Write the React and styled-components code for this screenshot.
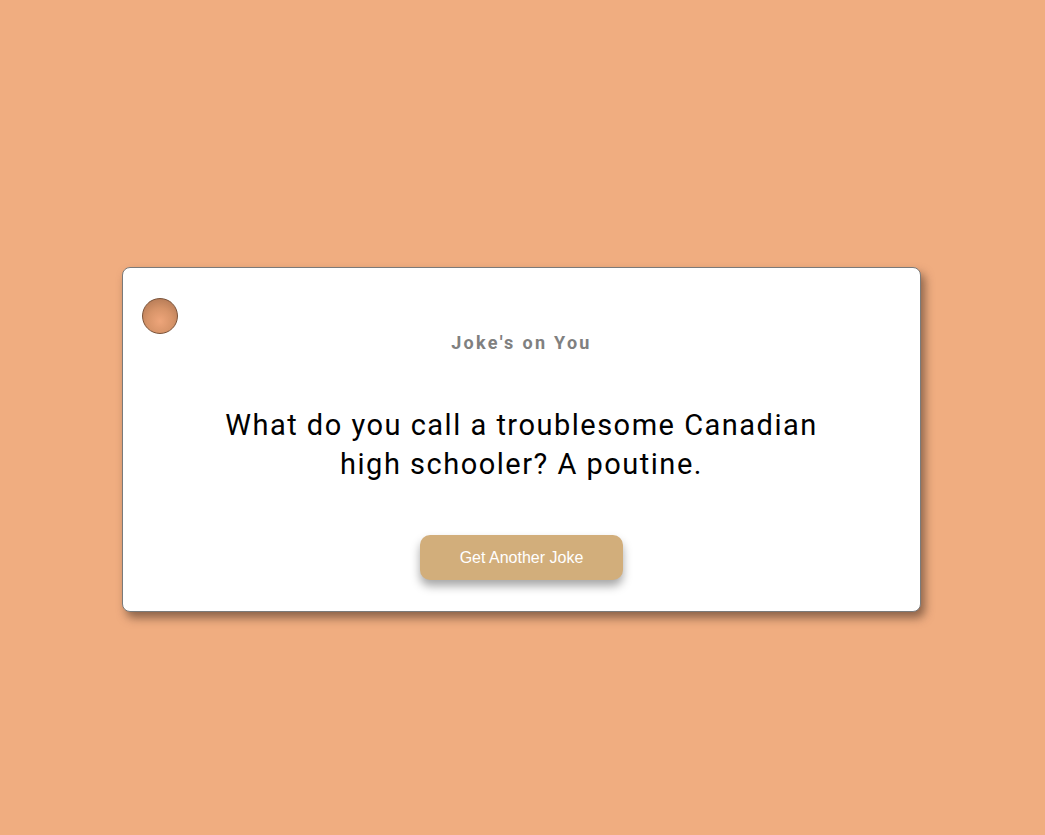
import React from 'react'
import styled, { createGlobalStyle } from 'styled-components'

const GlobalStyle = createGlobalStyle`
  html, body {
    margin: 0;
    background: #f0ad80;
  }
  body {
    font-family: Roboto, "Liberation Sans", sans-serif;
  }
`

const Page = styled.div`
  min-height: 835px;
  display: flex;
  flex-direction: column;
  align-items: center;
  padding: 267px 2px 0 0;
  box-sizing: border-box;
`

const Card = styled.div`
  position: relative;
  width: 799px;
  height: 345px;
  box-sizing: border-box;
  background: #fff;
  border: 1px solid #7a7a7a;
  border-radius: 8px;
  box-shadow: 4px 6px 10px rgba(60, 40, 30, 0.55);
  display: flex;
  flex-direction: column;
  align-items: center;
  padding-top: 64px;
`

const Dot = styled.div`
  position: absolute;
  left: 19px;
  top: 30px;
  width: 34px;
  height: 34px;
  border-radius: 50%;
  border: 1px solid #7a5238;
  background: radial-gradient(circle at 50% 65%, #eea57a 0%, #d79469 45%, #a8714f 100%);
`

const Title = styled.h1`
  margin: 0;
  font-size: 18px;
  font-weight: 700;
  letter-spacing: 2.3px;
  color: #808080;
  line-height: 22px;
`

const Joke = styled.p`
  margin: 52px 0 0;
  max-width: 640px;
  text-align: center;
  font-size: 29px;
  font-weight: 400;
  letter-spacing: 1.5px;
  line-height: 39px;
  color: #000;
`

const Button = styled.button`
  margin-top: 51px;
  width: 203px;
  height: 45px;
  border: none;
  border-radius: 10px;
  background: #d2ae7b;
  color: #fff;
  font-family: "Liberation Sans", Arial, sans-serif;
  font-size: 16px;
  box-shadow: 0 6px 10px rgba(0, 0, 0, 0.35);
  cursor: pointer;
`

export default function App () {
  return (
    <>
      <GlobalStyle />
      <Page>
        <Card>
          <Dot />
          <Title>Joke's on You</Title>
          <Joke>What do you call a troublesome Canadian high schooler? A poutine.</Joke>
          <Button>Get Another Joke</Button>
        </Card>
      </Page>
    </>
  )
}
